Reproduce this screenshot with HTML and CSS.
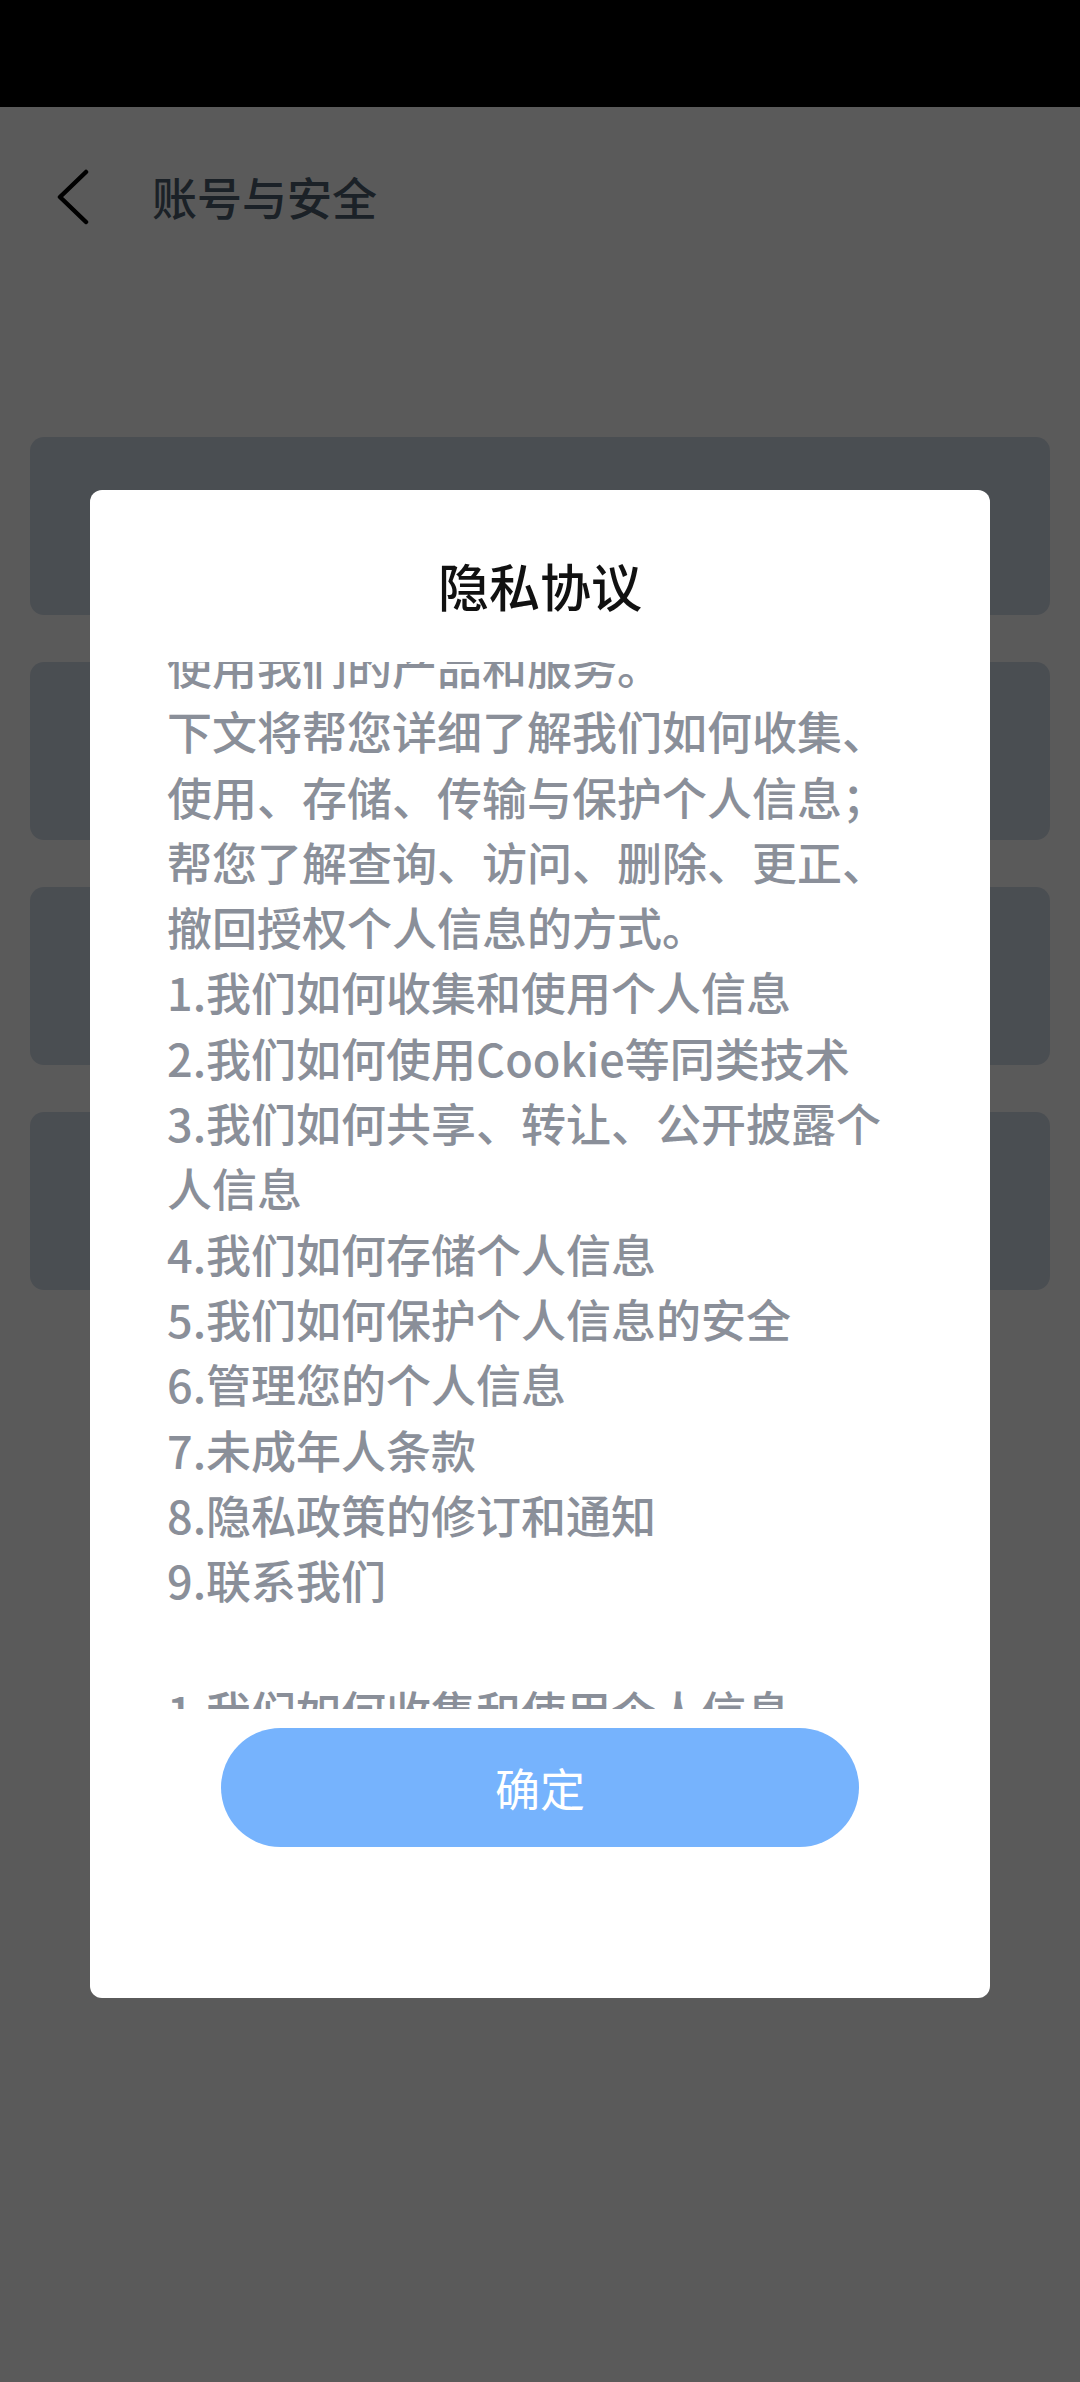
FILE: index.html
```html
<!DOCTYPE html>
<html lang="zh-CN">
<head>
<meta charset="utf-8">
<title>账号与安全</title>
<link rel="stylesheet" href="styles.css">
</head>
<body>
<div class="screen">
  <div class="status-bar"></div>
  <div class="page">
    <header class="app-bar">
      <svg class="back" viewBox="0 0 40 60" width="40" height="60" aria-hidden="true">
        <polyline points="29,5 3,30 29,55" fill="none" stroke="#000" stroke-width="4.5" stroke-linecap="round" stroke-linejoin="round"/>
      </svg>
      <h1 class="app-title">账号与安全</h1>
    </header>
    <div class="card-list">
      <div class="card"></div>
      <div class="card"></div>
      <div class="card"></div>
      <div class="card"></div>
    </div>
  </div>

  <div class="overlay">
    <div class="dialog">
      <h2 class="dialog-title">隐私协议</h2>
      <div class="dialog-body">
        <div class="dialog-text">
          <p class="line">使用我们的产品和服务。</p>
          <p class="line">下文将帮您详细了解我们如何收集、</p>
          <p class="line">使用、存储、传输与保护个人信息；</p>
          <p class="line">帮您了解查询、访问、删除、更正、</p>
          <p class="line">撤回授权个人信息的方式。</p>
          <p class="line">1.我们如何收集和使用个人信息</p>
          <p class="line">2.我们如何使用Cookie等同类技术</p>
          <p class="line">3.我们如何共享、转让、公开披露个</p>
          <p class="line">人信息</p>
          <p class="line">4.我们如何存储个人信息</p>
          <p class="line">5.我们如何保护个人信息的安全</p>
          <p class="line">6.管理您的个人信息</p>
          <p class="line">7.未成年人条款</p>
          <p class="line">8.隐私政策的修订和通知</p>
          <p class="line">9.联系我们</p>
          <p class="line">&nbsp;</p>
          <p class="line">1.我们如何收集和使用个人信息</p>
        </div>
      </div>
      <button class="confirm" type="button">确定</button>
    </div>
  </div>
</div>
</body>
</html>
```

FILE: styles.css
```css
* {
  box-sizing: border-box;
}

html, body {
  margin: 0;
  padding: 0;
}

body {
  width: 1080px;
  height: 2382px;
  overflow: hidden;
  font-family: "Noto Sans CJK SC", "Noto Sans", sans-serif;
  background: #ffffff;
}

.screen {
  position: relative;
  width: 1080px;
  height: 2382px;
  overflow: hidden;
  background: #ffffff;
}

.status-bar {
  height: 107px;
  background: #000000;
}

.page {
  display: flex;
  flex-direction: column;
}

.app-bar {
  height: 180px;
  display: flex;
  align-items: center;
  padding-left: 57px;
}

.back {
  display: block;
  flex: none;
}

.app-title {
  margin: 0 0 0 55px;
  font-size: 45px;
  font-weight: 500;
  line-height: 60px;
  color: #4c5d6e;
}

.card-list {
  display: flex;
  flex-direction: column;
  gap: 47px;
  padding: 150px 30px 0;
}

.card {
  height: 178px;
  border-radius: 14px;
  background: #d2dde8;
}

.overlay {
  position: absolute;
  inset: 0;
  background: rgba(0, 0, 0, 0.647);
  display: flex;
  flex-direction: column;
  align-items: center;
  padding-top: 490px;
}

.dialog {
  width: 900px;
  height: 1508px;
  background: #ffffff;
  border-radius: 12px;
  display: flex;
  flex-direction: column;
  align-items: center;
  padding: 59px 0 0;
}

.dialog-title {
  margin: 0;
  font-size: 51px;
  font-weight: 500;
  line-height: 72px;
  color: #111111;
  text-align: center;
}

.dialog-body {
  align-self: stretch;
  margin-top: 41px;
  height: 1047px;
  overflow: hidden;
  padding: 0 77px;
}

.dialog-text {
  margin-top: -29px;
}

.line {
  margin: 0;
  font-size: 45px;
  font-weight: 500;
  line-height: 65.3px;
  color: #8a8f99;
  white-space: nowrap;
}

.confirm {
  margin-top: 19px;
  width: 638px;
  height: 119px;
  border: none;
  border-radius: 60px;
  background: #76b3fd;
  color: #ffffff;
  font-family: "Noto Sans CJK SC", "Noto Sans", sans-serif;
  font-size: 45px;
  line-height: 60px;
  padding: 0;
}
```
